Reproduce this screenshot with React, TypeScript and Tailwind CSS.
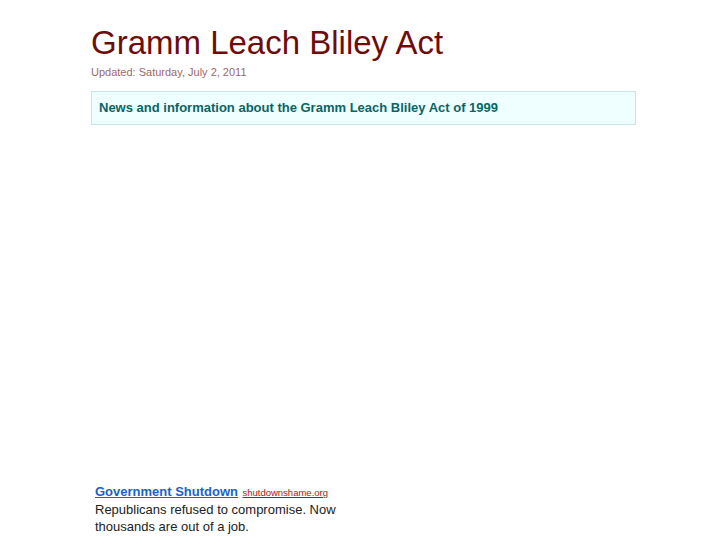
export default function App() {
  return (
    <div className="min-h-[545px] bg-white font-['Liberation_Sans',Arial,sans-serif]">
      <div className="ml-[91px] w-[545px] pt-[24px]">
        {/* Header */}
        <h1 className="text-[33px] leading-[38px] text-[#6e0b0b]">Gramm Leach Bliley Act</h1>
        <p className="mt-[3px] text-[11px] leading-[14px] text-[#a0686a]">Updated: Saturday, July 2, 2011</p>

        {/* Tagline box */}
        <div className="mt-[12px] h-[34px] border border-[#c9e6e6] bg-[#effefe] px-[7px] flex items-center">
          <h2 className="text-[13px] font-bold text-[#0a6464]">
            News and information about the Gramm Leach Bliley Act of 1999
          </h2>
        </div>

        {/* Ad space */}
        <div className="h-[357px]" />

        <div className="w-[260px] pl-[4px]">
          <p className="leading-[17px]">
            <a href="#" className="text-[13px] font-bold text-[#1a63c4] underline">Government Shutdown</a>{" "}
            <a href="#" className="text-[9.5px] text-[#c01010] underline">shutdownshame.org</a>
          </p>
          <p className="text-[13px] leading-[17px] text-[#222]">
            Republicans refused to compromise. Now thousands are out of a job.
          </p>
        </div>
      </div>
    </div>
  );
}
